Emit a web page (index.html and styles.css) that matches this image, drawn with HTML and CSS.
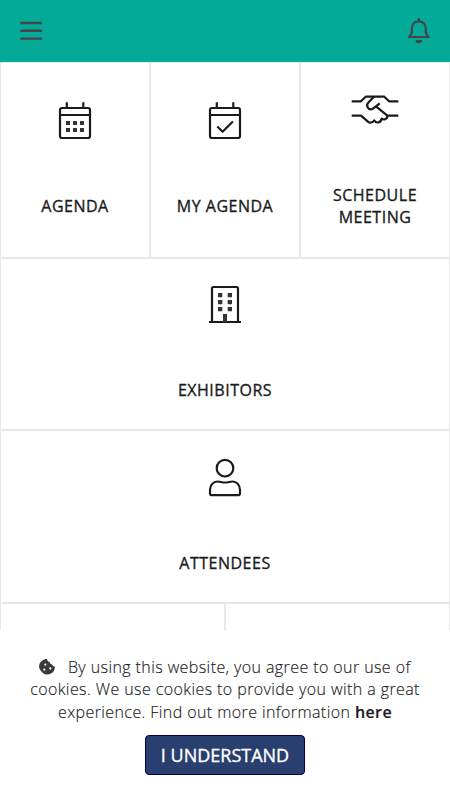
FILE: index.html
```
<!DOCTYPE html>
<html lang="en">
<head>
    <meta charset="UTF-8">
    <meta name="viewport" content="width=device-width, initial-scale=1.0">
    <title>Event</title>
    <link rel="stylesheet" href="styles.css">
</head>
<body>
    <header class="topbar">
        <button class="icon-button" aria-label="Menu">
            <svg class="menu-icon" width="22" height="22" viewBox="0 0 22 22">
                <path d="M0.3 3H22M0.3 10.8H22M0.3 18.6H22"/>
            </svg>
        </button>
        <button class="icon-button" aria-label="Notifications">
            <svg class="bell-icon" width="24" height="26" viewBox="0 0 24 26">
                <path d="M11.8 1v2.5M2 19h19.6c-1.8-1.6-2.8-3.2-2.8-6v-2.5c0-4-2.6-7.2-7-7.2s-7 3.2-7 7.2V13c0 2.8-1 4.4-2.8 6z"/>
                <path class="clapper" d="M8.6 22h6.4a3.2 3.2 0 0 1-6.4 0z"/>
            </svg>
        </button>
    </header>

    <main class="tiles">
        <a class="tile">
            <svg class="tile-icon" viewBox="0 0 48 48">
                <rect x="9" y="11" width="30" height="30" rx="2"/>
                <path d="M9 18h30M15.8 5.3V11M32.3 5.3V11"/>
                <path class="solid" d="M15 24h4v4h-4zM22 24h4v4h-4zM29 24h4v4h-4zM15 31h4v4h-4zM22 31h4v4h-4zM29 31h4v4h-4z"/>
            </svg>
            <span class="tile-label">Agenda</span>
        </a>
        <a class="tile">
            <svg class="tile-icon" viewBox="0 0 48 48">
                <rect x="9" y="11" width="30" height="30" rx="2"/>
                <path d="M9 18h30M15.8 5.3V11M32.3 5.3V11M16.3 29.5l5.3 5.2L31.9 24.5"/>
            </svg>
            <span class="tile-label">My Agenda</span>
        </a>
        <a class="tile">
            <svg class="tile-icon" viewBox="0 0 48 48">
                <path d="M.7 15.3H10l4.7-4.6h18.6l4.7 4.6h9.3"/>
                <path d="M23 10.7l-5.4 5.6c-3.2 3.4-.6 7 2.2 7 1.2 0 2-.4 2.9-1.2l6-4.8M25.3 20.7l11 9h11"/>
                <path d="M.7 29.7H10l7.2 6.2c1.5 1.2 4.2.9 6.1-1.5 1.2 2.6 6.4 3.6 7.4-1.9 2.4 2.2 6 .2 5.6-2.8"/>
            </svg>
            <span class="tile-label">Schedule Meeting</span>
        </a>
        <a class="tile tile-full">
            <svg class="tile-icon" viewBox="0 0 48 48">
                <path d="M8 41h32M11 41V7.5C11 6.5 11.5 6 12.5 6h23c1 0 1.5.5 1.5 1.5V41"/>
                <path class="solid" d="M17 12h4.3v4.3H17zM26.7 12H31v4.3h-4.3zM17 19h4.3v4.3H17zM26.7 19H31v4.3h-4.3zM17 26h4.3v4.3H17zM26.7 26H31v4.3h-4.3zM22 33h4v8h-4z"/>
            </svg>
            <span class="tile-label">Exhibitors</span>
        </a>
        <a class="tile tile-full">
            <svg class="tile-icon" viewBox="0 0 48 48">
                <circle cx="24" cy="14.2" r="8.3"/>
                <path d="M9 39.2V36c0-5 3.3-8.500 7.500-8.500 2.500 0 4.500 1 7.500 1s5-1 7.500-1c4.200 0 7.500 3.500 7.500 8.500v3.200c0 1.300-.7 2-2 2H11c-1.300 0-2-.7-2-2z"/>
            </svg>
            <span class="tile-label">Attendees</span>
        </a>
        <a class="tile tile-half"></a>
        <a class="tile tile-half"></a>
    </main>

    <div class="cookie-banner">
        <p class="cookie-text">
            <svg class="cookie-icon" width="16" height="16" viewBox="0 0 16 16">
                <path fill-rule="evenodd" d="M8 .1c.2 1.500 1.100 2.800 2.700 3 .1 1.300 1 2.400 2.400 2.500.5 1.100 1.500 2 2.800 2.100.1 1.600-.4 2.900-1.100 4.200-.6 1.200-1.600 2.100-2.900 2.700-1.400.8-3 1.200-4.600.9-1.300-.2-2.600-.7-3.600-1.700S1.700 11.900.9 10.500C.1 9.100-.1 7.700.2 6.200c.2-1.300.8-2.500 1.700-3.400C3 1.600 4.300.7 5.700.3 6.500.1 7.200 0 8 .1zM6.300 4.500a1.100 1.100 0 1 0 0 2.200 1.100 1.100 0 0 0 0-2.200zM5.300 9.500a1.100 1.100 0 1 0 0 2.200 1.100 1.100 0 0 0 0-2.200zM11.300 8.300a1.100 1.100 0 1 0 0 2.200 1.100 1.100 0 0 0 0-2.200z"/>
            </svg>
            By using this website, you agree to our use of cookies. We use cookies to provide you with a great experience. Find out more information <a class="cookie-link">here</a>
        </p>
        <button class="cookie-accept">I UNDERSTAND</button>
    </div>
</body>
</html>
```
FILE: styles.css
```
* {
    box-sizing: border-box;
}

body {
    margin: 0;
    height: 100vh;
    display: flex;
    flex-direction: column;
    overflow: hidden;
    background: #fff;
    color: #1b1b1d;
    font-family: 'Open Sans', sans-serif;
    font-size: 16px;
    line-height: 22.5px;
}

.topbar {
    flex: none;
    height: 62px;
    padding: 0 19px 0 20px;
    display: flex;
    align-items: center;
    justify-content: space-between;
    background: #03aa97;
}

.icon-button {
    display: flex;
    padding: 0;
    border: 0;
    background: none;
}

.menu-icon,
.bell-icon {
    fill: none;
    stroke: #454446;
    stroke-width: 2.4;
    stroke-linejoin: round;
}

.bell-icon {
    stroke-width: 2.2;
    stroke-linecap: round;
}

.bell-icon .clapper {
    fill: #454446;
    stroke: none;
}

/* Tiles */
.tiles {
    flex: 1;
    min-height: 0;
    overflow: hidden;
    display: grid;
    grid-template-columns: repeat(6, 1fr);
    grid-template-rows: 195.5px 172.5px 172.5px 172.5px;
}

.tile {
    grid-column: span 2;
    display: flex;
    flex-direction: column;
    align-items: center;
    justify-content: center;
    border: 1px solid #e8e8e8;
}

.tile-half {
    grid-column: span 3;
}

.tile-full {
    grid-column: span 6;
}

.tile-icon {
    width: 48px;
    height: 48px;
    margin-bottom: 50px;
    fill: none;
    stroke: #1b1b1d;
    stroke-width: 2.2;
    stroke-linejoin: round;
}

.tile-icon .solid {
    fill: #343436;
    stroke: none;
}

.tile-label {
    max-width: 110px;
    margin-bottom: 5px;
    text-align: center;
    text-transform: uppercase;
    letter-spacing: 0.5px;
    -webkit-text-stroke: 0.35px currentColor;
}

/* Cookie consent */
.cookie-banner {
    flex: none;
    height: 170px;
    padding: 25.5px 20px 0;
    text-align: center;
    background: #fff;
}

.cookie-text {
    margin: 0 0 12px;
    font-weight: 300;
    letter-spacing: 0.41px;
    -webkit-text-stroke: 0.15px currentColor;
}

.cookie-icon {
    margin-right: 8px;
    vertical-align: -2px;
    fill: #3a3a3c;
}

.cookie-link {
    font-weight: 600;
}

.cookie-accept {
    width: 160px;
    height: 40px;
    padding: 0;
    border: 1px solid #00004f;
    border-radius: 4px;
    background: #293f6f;
    color: #fff;
    font-family: inherit;
    font-size: 18px;
    -webkit-text-stroke: 0.35px currentColor;
}
```
